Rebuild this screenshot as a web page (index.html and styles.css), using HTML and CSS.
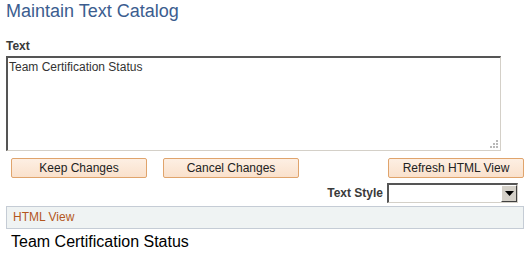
FILE: index.html
```html
<!DOCTYPE html>
<html lang="en">
<head>
  <meta charset="UTF-8" />
  <title>Maintain Text Catalog</title>
  <link rel="stylesheet" href="styles.css">
</head>
<body>

<div class="page">
  <h1 class="title">Maintain Text Catalog</h1>

  <div class="label">Text</div>
  <div class="textbox">
    Team Certification Status
    <svg class="grip" width="9" height="9" viewBox="0 0 9 9">
      <rect x="7" y="1" width="2" height="2" fill="#b9b9b9"/>
      <rect x="4" y="4" width="2" height="2" fill="#b9b9b9"/>
      <rect x="7" y="4" width="2" height="2" fill="#b9b9b9"/>
      <rect x="1" y="7" width="2" height="2" fill="#b9b9b9"/>
      <rect x="4" y="7" width="2" height="2" fill="#b9b9b9"/>
      <rect x="7" y="7" width="2" height="2" fill="#b9b9b9"/>
    </svg>
  </div>

  <div class="actions">
    <button class="btn">Keep Changes</button>
    <button class="btn">Cancel Changes</button>
    <button class="btn refresh">Refresh HTML View</button>
  </div>

  <div class="style-row">
    <span class="label">Text Style</span>
    <div class="dropdown">
      <span class="dropdown-value"></span>
      <span class="dropdown-btn">
        <svg width="9" height="5" viewBox="0 0 9 5"><polygon points="0,0 9,0 4.5,5" fill="#000"/></svg>
      </span>
    </div>
  </div>

  <div class="section-head">HTML View</div>
  <div class="preview">Team Certification Status</div>
</div>

</body>
</html>
```

FILE: styles.css
```css
* {
  box-sizing: border-box;
  margin: 0;
  padding: 0;
}

body {
  font-family: "Liberation Sans", Arial, sans-serif;
  font-size: 12px;
  color: #333;
  background: #fff;
}

.page {
  padding: 0 3px 0 6px;
}

.title {
  font-size: 18px;
  font-weight: normal;
  line-height: 22px;
  color: #3b5d8f;
  margin-bottom: 17px;
}

.label {
  font-weight: bold;
  line-height: 14px;
  color: #3a3a3a;
}

.textbox {
  position: relative;
  width: 495px;
  height: 95px;
  margin-top: 3px;
  padding: 2px 1px;
  line-height: 14px;
  color: #333;
  border-top: 2px solid #555;
  border-left: 2px solid #555;
  border-right: 1px solid #d4d0c8;
  border-bottom: 1px solid #d4d0c8;
}

.grip {
  position: absolute;
  right: 2px;
  bottom: 2px;
}

.actions {
  display: flex;
  gap: 16px;
  padding-left: 5px;
  margin-top: 7px;
}

.btn {
  width: 136px;
  height: 20px;
  font-family: inherit;
  font-size: 12px;
  color: #222;
  background: linear-gradient(#fdefe3, #fae1cc);
  border: 1px solid #e0a46c;
  border-radius: 2px;
  cursor: pointer;
}

.refresh {
  margin-left: auto;
}

.style-row {
  display: flex;
  justify-content: flex-end;
  align-items: center;
  gap: 4px;
  margin-top: 5px;
  padding-right: 6px;
}

.dropdown {
  display: flex;
  width: 131px;
  height: 20px;
  border-top: 2px solid #555;
  border-left: 2px solid #555;
  border-right: 1px solid #d4d0c8;
  border-bottom: 1px solid #d4d0c8;
}

.dropdown-value {
  flex: 1;
}

.dropdown-btn {
  display: flex;
  align-items: center;
  justify-content: center;
  width: 16px;
  background: #d4d0c8;
  border-top: 1px solid #fff;
  border-left: 1px solid #fff;
  border-right: 1px solid #404040;
  border-bottom: 1px solid #404040;
}

.section-head {
  margin-top: 3px;
  height: 23px;
  padding-left: 6px;
  line-height: 21px;
  color: #b4571d;
  background: #eff3f3;
  border: 1px solid #c5ccd5;
}

.preview {
  margin-top: 4px;
  padding-left: 5px;
  font-size: 16px;
  line-height: 18px;
  color: #000;
}
```
